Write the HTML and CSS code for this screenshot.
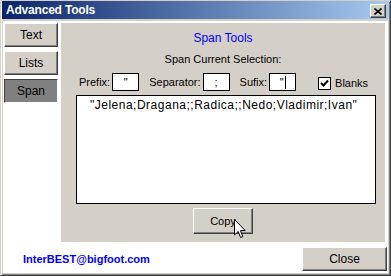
FILE: index.html
```html
<!doctype html>
<html>
<head>
    <meta charset="UTF-8">
    <title>Advanced Tools</title>
    <link rel="stylesheet" href="styles.css">
</head>
<body>
<div class="window">
    <div class="titlebar">
        <span class="title">Advanced Tools</span>
        <span class="tb-close"><svg width="8" height="7" viewBox="0 0 8 7"><path d="M0.5 0.5 L7.5 6.5 M7.5 0.5 L0.5 6.5" stroke="#000" stroke-width="1.6" fill="none"/></svg></span>
    </div>
    <div class="client">
        <div class="main">
            <ul class="tabs">
                <li><button class="btn tab">Text</button></li>
                <li><button class="btn tab">Lists</button></li>
                <li><button class="btn tab on">Span</button></li>
            </ul>
            <div class="panel">
                <h2 class="hd">Span Tools</h2>
                <p class="sub">Span Current Selection:</p>
                <div class="fields">
                    <label class="field">Prefix:<span class="box">"</span></label>
                    <label class="field">Separator:<span class="box">;</span></label>
                    <label class="field">Sufix:<span class="box">"<i class="caret"></i></span></label>
                    <label class="check"><span class="checkbox"><svg width="11" height="11" viewBox="0 0 11 11"><path d="M2 5 L4.5 7.5 L9 2.5" stroke="#000" stroke-width="2" fill="none"/></svg></span>Blanks</label>
                </div>
                <div class="output">"Jelena;Dragana;;Radica;;Nedo;Vladimir;Ivan"</div>
                <div class="actions">
                    <button class="btn copy">Copy<svg class="cursor" width="12" height="20" viewBox="0 0 12 20"><path d="M0.5 0.5 V16 L4.2 12.4 L6.6 18.5 L8.8 17.6 L6.4 11.6 H11.2 Z" fill="#fff" stroke="#000" stroke-width="1"/></svg></button>
                </div>
            </div>
        </div>
        <div class="footer">
            <a class="email" href="javascript:void(0);">InterBEST@bigfoot.com</a>
            <button class="btn close">Close</button>
        </div>
    </div>
</div>
</body>
</html>
```
FILE: styles.css
```css
html, body, h2, ul, p { margin: 0; padding: 0; }
ul { list-style: none; }
body { font: 11px/13px 'Liberation Sans', Arial, sans-serif; color: #000; background: #fff; }

.window { box-sizing: border-box; width: 391px; height: 276px; display: flex; flex-direction: column; background: #d4d0c8; border: 1px solid; border-color: #d4d0c8 #404040 #404040 #d4d0c8; box-shadow: inset 1px 1px #fff, inset -1px -1px #808080; padding: 0 2px 2px; }
.titlebar { height: 18px; margin: 0 -1px 2px; display: flex; align-items: center; justify-content: space-between; background: linear-gradient(to right, #0a246a, #a6caf0); }
.titlebar .title { padding-left: 4px; color: #fff; font-weight: bold; font-size: 12px; letter-spacing: -0.2px; }
.tb-close { box-sizing: border-box; width: 16px; height: 14px; margin: 2px 3px 0 0; display: flex; align-items: center; justify-content: center; background: #d4d0c8; border: 1px solid; border-color: #fff #404040 #404040 #fff; box-shadow: inset -1px -1px #808080; }

.client { flex: 1; display: flex; flex-direction: column; background: #fff; }
.main { display: flex; padding-top: 2px; }

.btn { box-sizing: border-box; padding: 0; background: #d4d0c8; border: 1px solid; border-color: #fff #404040 #404040 #fff; box-shadow: inset -1px -1px #808080; font: 11px 'Liberation Sans', Arial, sans-serif; color: #000; }
.tabs { width: 57px; padding-left: 1px; }
.tabs li { margin-bottom: 4px; }
.tab { display: block; width: 54px; height: 24px; font-size: 12px; }
.tab.on { background: #808080; border-color: #404040 #fff #fff #404040; box-shadow: inset 1px 1px #808080; }

.panel { box-sizing: border-box; width: 324px; height: 219px; margin-right: 2px; padding-top: 8px; background: #d4d0c8; }
.panel .hd { font-size: 12px; line-height: 14px; font-weight: normal; color: #0000ff; text-align: center; }
.panel .sub { margin-top: 7px; line-height: 14px; text-align: center; }

.fields { display: flex; align-items: center; height: 18px; margin-top: 7px; padding-left: 18px; }
.field { display: flex; align-items: center; gap: 2px; margin-right: 10px; }
.box { box-sizing: border-box; width: 27px; height: 18px; display: flex; align-items: center; justify-content: center; border: 1px solid #000; background: #fff; }
.caret { display: inline-block; width: 1px; height: 13px; margin-left: 1px; background: #000; }
.check { display: flex; align-items: center; gap: 4px; margin-left: 12px; padding-top: 3px; }
.checkbox { box-sizing: border-box; width: 13px; height: 13px; display: flex; align-items: center; justify-content: center; border: 1px solid #000; background: #fff; }

.output { box-sizing: border-box; height: 109px; margin: 4px 9px 0 15px; padding: 2px 13px; border: 1px solid #000; background: #fff; font-size: 12px; line-height: 15px; letter-spacing: 0.5px; }

.actions { display: flex; justify-content: center; margin-top: 4px; }
.copy { position: relative; width: 60px; height: 26px; }
.copy .cursor { position: absolute; left: 40px; top: 10px; }

.footer { flex: 1; display: flex; justify-content: space-between; align-items: flex-start; }
.email { margin: 11px 0 0 20px; color: #0000ff; font-weight: bold; text-decoration: none; }
.close { width: 85px; height: 24px; margin: 5px 1px 0 0; font-size: 12px; }
```
